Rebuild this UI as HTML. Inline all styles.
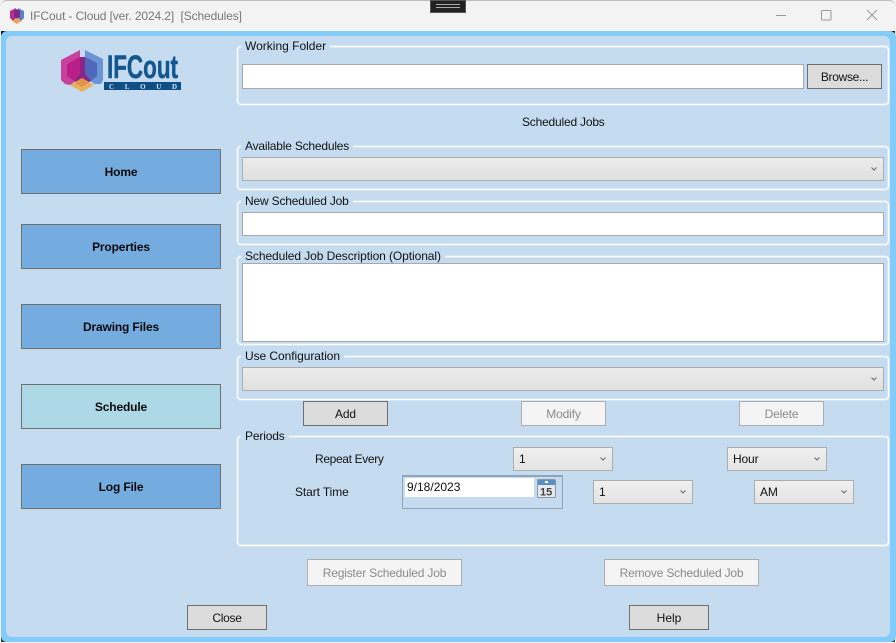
<!DOCTYPE html>
<html><head><meta charset="utf-8">
<style>
html,body{margin:0;padding:0;width:896px;height:643px;overflow:hidden;background:#f3f3f3}
body{position:relative;font-family:"Liberation Sans",sans-serif;font-size:12px;color:#111;letter-spacing:-.15px}
div{box-sizing:border-box}
.a{position:absolute}
.t{position:absolute;white-space:nowrap;line-height:16px}
.gb{position:absolute;left:237px;width:652px;border:1px solid #fff;border-radius:4px;box-shadow:inset 0 0 0 1px #d6e6f4,0 0 0 1px #d6e6f4}
.lg{position:absolute;left:241px;padding:0 4px;background:#c5dcf0;white-space:nowrap;line-height:16px;color:#111}
.in{position:absolute;background:#fff;border:1px solid #a9a9a9}
.cb{position:absolute;border:1px solid #adadad;background:linear-gradient(#f0f0f0,#e4e4e4);line-height:22px;padding-left:5px}
.cb svg{position:absolute;right:6px;top:9px}
.btn{position:absolute;border:1px solid #6f6f6f;background:#dcdcdc;text-align:center;color:#111}
.dis{border-color:#adadad;background:#f4f4f4;color:#8a8a8a}
.nav{position:absolute;left:21px;width:200px;height:45px;border:1px solid #6f6f6f;background:#75ace0;text-align:center;line-height:45px;font-weight:bold;font-size:12px;color:#0a0a0a}
</style></head><body>
<!-- title bar -->
<div class="a" style="left:0;top:0;width:896px;height:31px;background:#f3f3f3;border-top:1px solid #bdbdbd;border-radius:7px 7px 0 0"></div>
<svg class="a" style="left:9px;top:7px" width="16" height="17" viewBox="0 0 16 17">
<path d="M1 4L7 1V11L4 14L1 11Z" fill="#c02c8c"/><path d="M9 1L15 4V11L12 14L9 11Z" fill="#5b7fc8"/><path d="M5 4L8 2L11 4V10L8 12L5 10Z" fill="#7a2a88"/><path d="M3 14L8 11L13 14L8 17Z" fill="#e8a85c"/></svg>
<div class="t" style="left:30px;top:8px;color:#777;font-size:12px;letter-spacing:-.12px">IFCout - Cloud [ver. 2024.2]&nbsp; [Schedules]</div>
<div class="a" style="left:430px;top:0;width:36px;height:13px;background:#222;border:1px solid #555"></div>
<div class="a" style="left:436px;top:4px;width:24px;height:1px;background:#aaa"></div>
<div class="a" style="left:436px;top:7px;width:24px;height:1px;background:#aaa"></div>
<svg class="a" style="left:770px;top:5px" width="120" height="22" viewBox="0 0 120 22" fill="none" stroke="#999" stroke-width="1">
<path d="M6 10.5H16"/><rect x="51.5" y="5.5" width="9.5" height="9.5" rx="1"/><path d="M97 5L107 15M107 5L97 15"/></svg>
<!-- window body -->
<div class="a" style="left:0;top:31px;width:896px;height:612px;background:#f3f3f3"></div>
<div class="a" style="left:1px;top:31px;width:6px;height:6px;background:#111"></div>
<div class="a" style="left:889px;top:31px;width:6px;height:6px;background:#111"></div>
<div class="a" style="left:1px;top:636px;width:6px;height:6px;background:#333"></div>
<div class="a" style="left:889px;top:636px;width:6px;height:6px;background:#333"></div>
<div class="a" style="left:1px;top:31px;width:895px;height:611px;background:#83cbf8;border-radius:6px"></div>
<div class="a" style="left:6px;top:36px;width:884px;height:601px;background:#c5dcf0;border-radius:6px"></div>
<!-- logo -->
<svg class="a" style="left:60px;top:48px" width="124" height="46" viewBox="0 0 124 46">
<path d="M1 12L20 2V30L10 37L5 36L1 32Z" fill="#c8429c"/>
<path d="M25 2L43 11V32L41 36L35 36L25 30Z" fill="#6a94d6"/>
<path d="M7 16L20 9V28L14 33L7 28Z" fill="#b81f88"/>
<path d="M25 9L37 15V28L31 33L25 28Z" fill="#5068bc"/>
<path d="M20 9H25V26L31 33L25 36H20L14 33L20 26Z" fill="#8a2486"/>
<path d="M10 37L22 30L34 37L22 44Z" fill="#eab05e"/>
<path d="M15 35L22 30L29 35L22 39Z" fill="#e29448"/>
<text x="47" y="30" font-family="Liberation Sans" font-weight="bold" font-size="32" fill="#14568f" stroke="#14568f" stroke-width=".5" textLength="71" lengthAdjust="spacingAndGlyphs" style="letter-spacing:0">IFCout</text>
<rect x="44" y="34" width="77" height="8" fill="#0f4f86"/>
<text x="49" y="41" font-family="Liberation Serif" font-weight="bold" font-size="7" fill="#d8e6f2" textLength="68" style="letter-spacing:0">CLOUD</text>
</svg>
<!-- nav -->
<div class="nav" style="top:149px">Home</div>
<div class="nav" style="top:224px">Properties</div>
<div class="nav" style="top:304px">Drawing Files</div>
<div class="nav" style="top:384px;background:#add8e6">Schedule</div>
<div class="nav" style="top:464px">Log File</div>
<!-- working folder -->
<div class="gb" style="top:46px;height:59px"></div>
<div class="lg" style="top:38px;letter-spacing:0">Working Folder</div>
<div class="in" style="left:242px;top:64px;width:562px;height:25px"></div>
<div class="btn" style="left:807px;top:64px;width:75px;height:25px;line-height:25px;letter-spacing:-.3px">Browse...</div>
<div class="t" style="left:522px;top:114px;letter-spacing:-.2px">Scheduled Jobs</div>
<!-- available -->
<div class="gb" style="top:146px;height:44px"></div>
<div class="lg" style="top:138px;letter-spacing:-.2px">Available Schedules</div>
<div class="cb" style="left:242px;top:157px;width:642px;height:24px;background:linear-gradient(#ececec,#e0e0e0)"><svg width="6" height="4" viewBox="0 0 6 4"><path d="M0.5 0.5L3 3L5.5 0.5" fill="none" stroke="#666"/></svg></div>
<!-- new -->
<div class="gb" style="top:201px;height:44px"></div>
<div class="lg" style="top:193px;letter-spacing:-.18px">New Scheduled Job</div>
<div class="in" style="left:242px;top:212px;width:642px;height:24px"></div>
<!-- desc -->
<div class="gb" style="top:256px;height:89px"></div>
<div class="lg" style="top:248px;letter-spacing:-.08px">Scheduled Job Description (Optional)</div>
<div class="in" style="left:242px;top:263px;width:642px;height:79px"></div>
<!-- config -->
<div class="gb" style="top:356px;height:44px"></div>
<div class="lg" style="top:348px;letter-spacing:-.06px">Use Configuration</div>
<div class="cb" style="left:242px;top:367px;width:642px;height:24px;background:linear-gradient(#ececec,#e0e0e0)"><svg width="6" height="4" viewBox="0 0 6 4"><path d="M0.5 0.5L3 3L5.5 0.5" fill="none" stroke="#666"/></svg></div>
<!-- buttons -->
<div class="btn" style="left:303px;top:401px;width:85px;height:25px;line-height:24px">Add</div>
<div class="btn dis" style="left:521px;top:401px;width:85px;height:25px;line-height:24px">Modify</div>
<div class="btn dis" style="left:739px;top:401px;width:85px;height:25px;line-height:24px">Delete</div>
<!-- periods -->
<div class="gb" style="top:436px;height:110px"></div>
<div class="lg" style="top:428px">Periods</div>
<div class="t" style="left:315px;top:451px;letter-spacing:-.35px">Repeat Every</div>
<div class="cb" style="left:513px;top:447px;width:100px;height:24px">1<svg width="6" height="4" viewBox="0 0 6 4"><path d="M0.5 0.5L3 3L5.5 0.5" fill="none" stroke="#666"/></svg></div>
<div class="cb" style="left:727px;top:447px;width:100px;height:24px">Hour<svg width="6" height="4" viewBox="0 0 6 4"><path d="M0.5 0.5L3 3L5.5 0.5" fill="none" stroke="#666"/></svg></div>
<div class="t" style="left:295px;top:484px;letter-spacing:-.1px">Start Time</div>
<div class="a" style="left:402px;top:475px;width:161px;height:34px;border:1px solid #8fa5b8;border-top-width:2px;background:#c5dcf0"></div>
<div class="a" style="left:405px;top:478px;width:129px;height:19px;background:#fff;padding-left:2px;line-height:19px;letter-spacing:0">9/18/2023</div>
<svg class="a" style="left:537px;top:479px" width="19" height="19" viewBox="0 0 19 19">
<rect x="0.5" y="0.5" width="18" height="18" rx="1" fill="#e4e8ec" stroke="#8a98a4"/><rect x="1" y="1" width="17" height="5" fill="#5a8fc0"/><rect x="8" y="2" width="3" height="2" fill="#fff"/>
<text x="3" y="16.5" font-family="Liberation Sans" font-weight="bold" font-size="11" fill="#444" style="letter-spacing:0">15</text></svg>
<div class="cb" style="left:593px;top:480px;width:100px;height:24px">1<svg width="6" height="4" viewBox="0 0 6 4"><path d="M0.5 0.5L3 3L5.5 0.5" fill="none" stroke="#666"/></svg></div>
<div class="cb" style="left:754px;top:480px;width:100px;height:24px">AM<svg width="6" height="4" viewBox="0 0 6 4"><path d="M0.5 0.5L3 3L5.5 0.5" fill="none" stroke="#666"/></svg></div>
<!-- bottom -->
<div class="btn dis" style="left:307px;top:559px;width:155px;height:27px;line-height:26px;letter-spacing:-.18px">Register Scheduled Job</div>
<div class="btn dis" style="left:604px;top:559px;width:155px;height:27px;line-height:26px;letter-spacing:-.18px">Remove Scheduled Job</div>
<div class="btn" style="left:187px;top:605px;width:80px;height:25px;line-height:25px;letter-spacing:-.3px">Close</div>
<div class="btn" style="left:629px;top:605px;width:80px;height:25px;line-height:25px;letter-spacing:0">Help</div>
</body></html>
